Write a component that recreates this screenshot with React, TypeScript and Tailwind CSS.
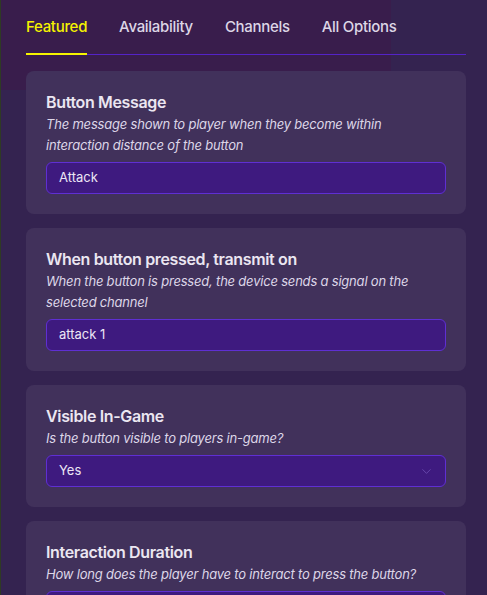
import { ChevronDown } from "lucide-react";

const TABS = ["Featured", "Availability", "Channels", "All Options"];

type Field = {
  title: string;
  desc: string;
  value: string;
  select?: boolean;
};

const FIELDS: Field[] = [
  {
    title: "Button Message",
    desc: "The message shown to player when they become within interaction distance of the button",
    value: "Attack",
  },
  {
    title: "When button pressed, transmit on",
    desc: "When the button is pressed, the device sends a signal on the selected channel",
    value: "attack 1",
  },
  {
    title: "Visible In-Game",
    desc: "Is the button visible to players in-game?",
    value: "Yes",
    select: true,
  },
  {
    title: "Interaction Duration",
    desc: "How long does the player have to interact to press the button?",
    value: "",
  },
];

function FieldCard({ f }: { f: Field }) {
  return (
    <div className="rounded-lg bg-[#41315b] px-5 pt-5 pb-5">
      <h3 className="text-[16px] leading-[22px] font-semibold text-[#ebe6f1] tracking-[-0.35px]">{f.title}</h3>
      <p className="mt-[1px] text-[13px] leading-[21px] italic text-[#ddd6e8] tracking-[-0.2px]">{f.desc}</p>
      <div className="mt-[6px] h-8 rounded-md border border-[#5f2fd3] bg-[#3e1a7f] flex items-center justify-between pl-3 pr-[11px]">
        <span className="text-[13px] text-[#ece6f5]">{f.value}</span>
        {f.select && <ChevronDown className="h-[15px] w-[15px] text-[#7d5fc4]" strokeWidth={1} />}
      </div>
    </div>
  );
}

export default function App() {
  return (
    <div
      className="relative h-[595px] w-[487px] overflow-hidden bg-[#342350] border-l border-[#2f3a25]"
      style={{ fontFamily: "Inter, 'Noto Sans', sans-serif" }}
    >
      {/* tinted game backdrop behind the header */}
      <div className="absolute left-0 top-0 h-[90px] w-[390px] bg-[#391d4c]" />
      <div className="absolute -left-px top-0 h-[80px] w-px bg-[#5a1a1a]" />
      <div className="relative pl-[25px] pr-[21px]">
        <div className="flex gap-[32px] border-b border-[#5423c8] pt-[16px]">
          {TABS.map((t, i) => (
            <div
              key={t}
              className={
                i === 0
                  ? "pb-[15px] -mb-px border-b-2 border-[#f6f400] text-[15px] leading-[22px] font-medium text-[#f6f400] tracking-[-0.3px]"
                  : "pb-[15px] text-[15px] leading-[22px] font-medium text-[#ddd6e6] tracking-[-0.3px]"
              }
            >
              {t}
            </div>
          ))}
        </div>
        <div className="mt-[16px] flex flex-col gap-[14px]">
          {FIELDS.map((f) => (
            <FieldCard key={f.title} f={f} />
          ))}
        </div>
      </div>
    </div>
  );
}
